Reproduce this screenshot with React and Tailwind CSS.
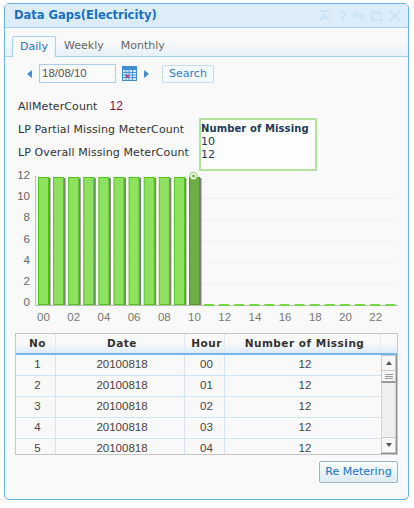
import React from 'react';

const rows = [
  { no: 1, hour: '00' },
  { no: 2, hour: '01' },
  { no: 3, hour: '02' },
  { no: 4, hour: '03' },
  { no: 5, hour: '04' },
];

const font = { fontFamily: '"DejaVu Sans", sans-serif' };
const numFont = 'font-["Liberation_Sans",sans-serif]';

function HeaderIcons() {
  return (
    <svg width="84" height="14" viewBox="0 0 84 14" className="text-[#cce3f5]">
      <g fill="currentColor">
        {/* go top */}
        <rect x="1" y="1" width="10" height="2" />
        <path d="M6 4 L11.5 11 L8 11 L6 8.5 L4 11 L0.5 11 Z" />
        {/* refresh */}
        <path d="M33 6 L38 1.5 L38 4 L43 4 L43 7 L38 7 L38 10 Z" opacity="0.8" />
        <path d="M46 7 L41 12 L41 9 L36 9 L36 7.5 L41 7.5 L41 3 Z" />
        {/* window */}
        <path d="M52 2 H63 V12 H52 Z M54 5 V10.5 H61.5 V5 Z" fillRule="evenodd" />
      </g>
      {/* close */}
      <path d="M71 2 L81 12 M81 2 L71 12" stroke="currentColor" strokeWidth="2.4" />
      <text x="20" y="12" fontSize="14" fontWeight="700" fill="currentColor" fontFamily="DejaVu Sans">?</text>
    </svg>
  );
}

function CalendarIcon() {
  return (
    <svg width="15" height="15" viewBox="0 0 15 15">
      <rect x="0" y="0" width="15" height="15" fill="#3f8fd0" />
      <rect x="1" y="4" width="13" height="10" fill="#d8ebf8" />
      <path d="M4 4 V14 M7 4 V14 M10.5 4 V14 M1 6.5 H14 M1 9 H14 M1 11.5 H14" stroke="#4a96d4" strokeWidth="1" />
      <rect x="4" y="9" width="3" height="2.5" fill="#b0476a" />
    </svg>
  );
}

function Chart() {
  const bars = Array.from({ length: 11 }, (_, i) => 38 + i * 15.1);
  const zeros = Array.from({ length: 13 }, (_, i) => 204 + i * 15.1);
  const yLabels = [
    { t: '12', y: 177 },
    { t: '10', y: 198 },
    { t: '8', y: 219 },
    { t: '6', y: 240.5 },
    { t: '4', y: 261.5 },
    { t: '2', y: 283 },
    { t: '0', y: 304 },
  ];
  const xLabels = ['00', '02', '04', '06', '08', '10', '12', '14', '16', '18', '20', '22'];

  // svg origin is page (10, 165)
  return (
    <svg width="395" height="165" viewBox="10 165 395 165" className="block">
      {yLabels.slice(1, 6).map((l) => (
        <line key={l.t} x1="36" x2="397" y1={l.y + 0.5} y2={l.y + 0.5} stroke="#f1f1f1" />
      ))}
      <line x1="35.5" x2="35.5" y1="176" y2="306" stroke="#bdbdbd" />
      <line x1="35" x2="398" y1="305.5" y2="305.5" stroke="#bdbdbd" />
      {yLabels.map((l) => (
        <text key={l.t} x="30" y={l.y + 2} textAnchor="end" fontSize="11.5" fill="#666" fontFamily="Liberation Sans">{l.t}</text>
      ))}
      {bars.map((x, i) => (
        <g key={i}>
          <rect x={x + 2} y="178" width="10.5" height="127" fill="#7f7f7f" />
          <rect
            x={x + 0.5}
            y="177.5"
            width="10"
            height="127"
            fill={i === 10 ? '#6cad45' : '#8fe25f'}
            stroke={i === 10 ? '#4f9f22' : '#4fc614'}
          />
        </g>
      ))}
      {zeros.map((x) => (
        <rect key={x} x={x} y="304" width="10" height="2" fill="#74d844" />
      ))}
      <circle cx="193.5" cy="176" r="4" fill="#8fcf6a" />
      <circle cx="193.5" cy="176" r="3" fill="#fff" />
      <circle cx="193.5" cy="176" r="1.5" fill="#6cad45" />
      {xLabels.map((t, i) => (
        <text key={t} x={43.5 + i * 30.2} y="321" textAnchor="middle" fontSize="11.5" fill="#777" fontFamily="Liberation Sans">{t}</text>
      ))}
    </svg>
  );
}

function Scrollbar() {
  return (
    <div className="w-[16px] flex flex-col border-r border-b border-[#8f8f8f] bg-[#f1f1f1]">
      <div className="h-[16px] flex items-center justify-center bg-[#f8f8f8] border border-[#c9c9c9]">
        <div className="w-0 h-0 border-x-[3px] border-x-transparent border-b-[4px] border-b-[#555]" />
      </div>
      <div className="h-[12px] flex flex-col justify-center items-center gap-[1px] bg-[#f7f7f7] border-x border-[#c9c9c9] border-b-2 border-b-[#9a9a9a]">
        <div className="w-[8px] h-[1px] bg-[#999]" />
        <div className="w-[8px] h-[1px] bg-[#999]" />
        <div className="w-[8px] h-[1px] bg-[#999]" />
      </div>
      <div className="flex-1 bg-[#efefef] border-x border-[#d6d6d6]" />
      <div className="h-[16px] flex items-center justify-center bg-[#f8f8f8] border border-[#c9c9c9]">
        <div className="w-0 h-0 border-x-[3px] border-x-transparent border-t-[4px] border-t-[#555]" />
      </div>
    </div>
  );
}

function DataTable() {
  const th = 'text-[10.5px] font-bold text-[#333] tracking-[0.5px] text-center border-r border-[#dfe9f2] pl-[4px] leading-[19px]';
  const td = `${numFont} text-[11.5px] text-[#444] text-center h-[21px] border-r border-b border-[#cfe4f7] pl-[4px]`;
  return (
    <div className="w-[383px] h-[122px] border border-[#c6c6c6] flex flex-col overflow-hidden">
      <div className="flex h-[21px] shrink-0 bg-gradient-to-b from-[#f9f9f9] via-[#f9f9f9] to-[#dcecf9] border-b-2 border-[#74b6e8]">
        <div className={`${th} w-[40px]`}>No</div>
        <div className={`${th} w-[129px]`}>Date</div>
        <div className={`${th} w-[40px]`}>Hour</div>
        <div className={`${th} w-[156px]`}>Number of Missing</div>
        <div className="flex-1" />
      </div>
      <div className="flex flex-1 min-h-0">
        <div className="w-[365px] overflow-hidden">
          {rows.map((r) => (
            <div key={r.no} className="flex leading-[18px]">
              <div className={`${td} w-[40px]`}>{r.no}</div>
              <div className={`${td} w-[129px]`}>20100818</div>
              <div className={`${td} w-[40px]`}>{r.hour}</div>
              <div className={`${td} w-[156px] border-r-0`}>12</div>
            </div>
          ))}
        </div>
        <Scrollbar />
      </div>
    </div>
  );
}

export default function App() {
  return (
    <div className="w-[414px] h-[508px] bg-white pt-[3px] pl-[4px]" style={font}>
      <div className="w-[405px] h-[497px] border border-[#66b2e6] rounded-[5px] bg-[#f9f9f9] overflow-hidden">
        {/* title */}
        <div className="h-[24px] bg-[#dcedf9] border-b border-[#a9d2ef] flex items-center justify-between pl-[9px] pr-[5px]">
          <span className="text-[11.5px] font-bold text-[#1a6fc0]">Data Gaps(Electricity)</span>
          <HeaderIcons />
        </div>

        {/* tabs */}
        <div className="h-[29px] mt-0 flex items-end pl-[7px] bg-gradient-to-b from-[#f9f9f9] via-[#f9f9f9] to-[#e6f1f9] border-b border-[#a9d2ef]">
          <div className="h-[21px] w-[44px] -mb-px text-center leading-[19px] text-[11px] text-[#1a6fc0] bg-[#f9f9f9] border border-b-0 border-[#a9d2ef] rounded-t-[2px]">Daily</div>
          <div className="h-[20px] ml-[8px] leading-[19px] text-[11px] text-[#666]">Weekly</div>
          <div className="h-[20px] ml-[17px] leading-[19px] text-[11px] text-[#666]">Monthly</div>
        </div>

        {/* date search */}
        <div className="flex items-center h-[19px] mt-[7px] pl-[22px]">
          <div className="w-0 h-0 border-y-[4px] border-y-transparent border-r-[5px] border-r-[#3f8fd0]" />
          <div className={`${numFont} ml-[7px] w-[77px] h-[19px] pl-[2px] leading-[16px] text-[11.5px] text-[#555] bg-[#fbfbfb] border border-[#a9cfee]`}>18/08/10</div>
          <div className="ml-[6px]"><CalendarIcon /></div>
          <div className="ml-[7px] w-0 h-0 border-y-[4px] border-y-transparent border-l-[5px] border-l-[#3f8fd0]" />
          <div className="ml-[13px] w-[52px] h-[18px] text-center leading-[15px] text-[11px] text-[#2f7fc8] bg-[#f4f9fd] border border-[#c3dcf0] rounded-[1px]">Search</div>
        </div>

        {/* counts + tooltip */}
        <div className="relative pl-[13px] mt-[14px] text-[11px] text-[#333] tracking-[0.1px]">
          <div className="h-[23.5px] leading-[18px]">
            AllMeterCount<span className={`${numFont} ml-[12px] text-[12px] text-[#7a0f52]`}>12</span>
          </div>
          <div className="h-[23.5px] leading-[18px]">LP Partial Missing MeterCount</div>
          <div className="h-[18px] leading-[18px]">LP Overall Missing MeterCount</div>
          <div className="absolute left-[194px] top-[21px] w-[118px] h-[53px] border-2 border-[#b3e39a] bg-[#fdfdfd] text-[#1c3a57] z-10 leading-[13.5px]">
            <div className="font-bold text-[10px] mt-[2px] mb-[-1px]">Number of Missing</div>
            <div>10</div>
            <div>12</div>
          </div>
        </div>

        {/* chart */}
        <div className="ml-[5px] mt-[3px]">
          <Chart />
        </div>

        {/* grid */}
        <div className="ml-[10px] mt-[3px]">
          <DataTable />
        </div>

        <div className="flex justify-end mt-[6px] pr-[10px]">
          <div className="w-[79px] h-[22px] text-center leading-[20px] text-[11px] text-[#1a6fc0] bg-gradient-to-b from-[#fbfdff] to-[#dcecf7] border border-[#9db4c6] rounded-[2px]">Re Metering</div>
        </div>
      </div>
    </div>
  );
}
